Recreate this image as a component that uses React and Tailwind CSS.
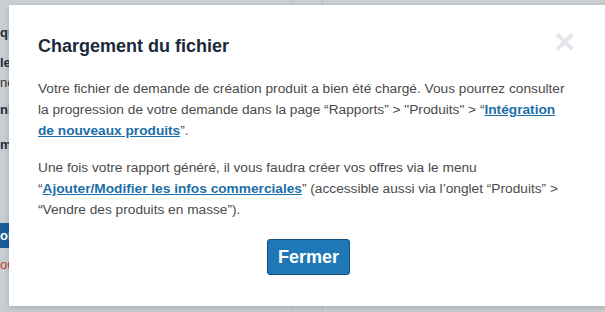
import React from 'react';

const font = { fontFamily: '"Liberation Sans", Arial, sans-serif' };

const Background = () => (
  <div className="flex h-full w-full">
    <div className="flex w-[292px] flex-col border-r border-[#b9bfc6] text-[13px] leading-[16px] text-[#1f2d3a]">
      <div className="mt-[25px] font-bold whitespace-nowrap">quantité</div>
      <div className="mt-[14px] font-bold whitespace-nowrap">le produit</div>
      <div className="mt-[4px] whitespace-nowrap text-[#333]">neuf</div>
      <div className="mt-[11px] font-bold whitespace-nowrap">nbre</div>
      <div className="mt-[19px] font-bold whitespace-nowrap">min</div>
      <div className="mt-[70px] h-[25px] w-[80px] bg-[#1c5d99] font-bold leading-[25px] text-white whitespace-nowrap">on</div>
      <div className="mt-[9px] text-[#b2403a] whitespace-nowrap">ou</div>
    </div>
    <div className="w-[31px] border-r border-[#b9bfc6]" />
    <div className="flex-1" />
  </div>
);

const Modal = () => (
  <div className="absolute left-[9px] top-[5px] h-[301px] w-[598px] bg-white pl-[29px] pr-[30px] pt-[29px] shadow-[0_2px_6px_rgba(0,0,0,0.15)]">
    <div className="flex items-start justify-between">
      <h2 className="text-[18px] font-bold leading-[24px] text-[#1b2a3a]">Chargement du fichier</h2>
      <span className="mt-[-7px] mr-[1px] text-[28px] font-bold leading-[32px] text-[#e3e7eb]">✕</span>
    </div>
    <div className="mt-[19px] w-[533px] text-[13.7px] leading-[21px] text-[#4a4a4a]">
      <p>
        Votre fichier de demande de création produit a bien été chargé. Vous pourrez consulter
        la progression de votre demande dans la page “Rapports” &gt; "Produits" &gt; “
        <a href="#" className="font-bold text-[#1c6ea7] underline">Intégration de nouveaux produits</a>”.
      </p>
      <p className="mt-[16px]">
        Une fois votre rapport généré, il vous faudra créer vos offres via le menu “
        <a href="#" className="font-bold text-[#1c6ea7] underline">Ajouter/Modifier les infos commerciales</a>”
        (accessible aussi via l’onglet “Produits” &gt; “Vendre des produits en masse”).
      </p>
    </div>
    <div className="mt-[19px] flex">
      <button className="ml-[229px] h-[36px] w-[83px] rounded-[3px] border border-[#14507e] bg-[#1f77b5] text-[18px] font-bold text-white">
        Fermer
      </button>
    </div>
  </div>
);

export default function App() {
  return (
    <div className="relative h-[312px] w-[605px] overflow-hidden bg-[#c9ced3]" style={font}>
      <Background />
      <Modal />
    </div>
  );
}
